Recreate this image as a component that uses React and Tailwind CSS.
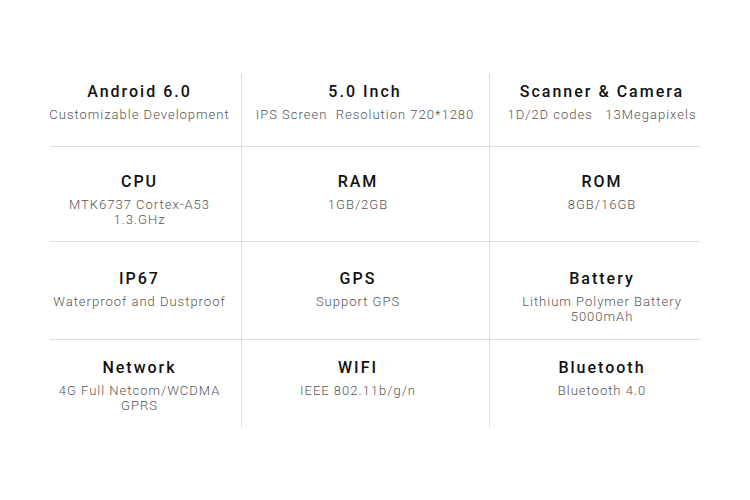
const specs = [
  [
    { title: 'Android 6.0', lines: ['Customizable Development'] },
    { title: '5.0 Inch', lines: ['IPS Screen\u00a0\u00a0Resolution 720*1280'] },
    { title: 'Scanner & Camera', lines: ['1D/2D codes\u00a0\u00a0\u00a013Megapixels'] },
  ],
  [
    { title: 'CPU', lines: ['MTK6737 Cortex-A53', '1.3.GHz'] },
    { title: 'RAM', lines: ['1GB/2GB'] },
    { title: 'ROM', lines: ['8GB/16GB'] },
  ],
  [
    { title: 'IP67', lines: ['Waterproof and Dustproof'] },
    { title: 'GPS', lines: ['Support GPS'] },
    { title: 'Battery', lines: ['Lithium Polymer Battery', '5000mAh'] },
  ],
  [
    { title: 'Network', lines: ['4G Full Netcom/WCDMA', 'GPRS'] },
    { title: 'WIFI', lines: ['IEEE 802.11b/g/n'] },
    { title: 'Bluetooth', lines: ['Bluetooth 4.0'] },
  ],
];

const rowClass = [
  'h-[73px] pt-[8px] border-b',
  'h-[95px] pt-[25px] border-b',
  'h-[98px] pt-[27px] border-b',
  'h-[87px] pt-[18px]',
];

const colClass = [
  'pr-[12px] border-r',
  'pr-[15px] border-r',
  'pl-[14px]',
];

const Cell = ({ title, lines, className }) => (
  <div className={`flex flex-col items-center text-center border-[#dcdcdc] ${className}`}>
    <h3 className="text-[16px] leading-[20px] font-medium tracking-[2px] text-[#111]">{title}</h3>
    <p className="mt-[5px] text-[13px] leading-[15px] font-light tracking-[1px] text-[#555]">
      {lines.map((l, i) => (
        <span key={i} className="block whitespace-nowrap">{l}</span>
      ))}
    </p>
  </div>
);

export default function App() {
  return (
    <div className="w-[750px] h-[500px] bg-white font-['Roboto',sans-serif] pt-[74px] pl-[50px]">
      <div className="grid grid-cols-[192px_248px_210px] w-[650px]">
        {specs.map((row, r) =>
          row.map((cell, c) => (
            <Cell
              key={`${r}-${c}`}
              {...cell}
              className={`${rowClass[r]} ${colClass[c]} ${r === 0 && c === 1 ? '!pr-[1px]' : ''}`}
            />
          ))
        )}
      </div>
    </div>
  );
}
